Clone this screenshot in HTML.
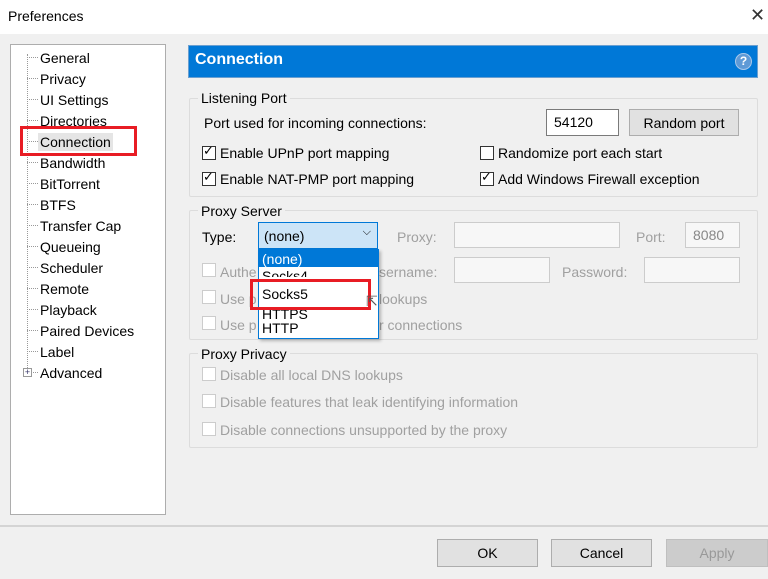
<!DOCTYPE html>
<html><head><meta charset="utf-8"><style>
*{margin:0;padding:0;box-sizing:border-box}
body{width:768px;height:579px;background:#f0f0f0;font-family:"Liberation Sans",Arial,sans-serif;font-size:14px;color:#000;position:relative;overflow:hidden;letter-spacing:0}
.a{position:absolute;white-space:nowrap}
.title{left:0;top:0;width:768px;height:34px;background:#fff}
.tree{left:10px;top:44px;width:156px;height:471px;background:#fff;border:1px solid #adadad}
.ti{position:absolute;left:29px;height:18px;line-height:18px;top:1px}
.dash{position:absolute;left:16px;width:11px;border-top:1px dotted #999}
.grp{border:1px solid #dcdcdc;border-radius:2px}
.gl{background:#f0f0f0;padding:0 3px}
.cb{width:14px;height:14px;border:1px solid #333;background:#fff}
.cbd{border-color:#ccc}
.dis{color:#a0a0a0}
.in{background:#f7f7f7;border:1px solid #ccc}
.btn{background:#e1e1e1;border:1px solid #adadad;text-align:center;line-height:26px;height:28px}
</style></head><body>
<div class="a title"></div>
<div class="a" style="left:8px;top:8px;font-size:14px">Preferences</div>
<div class="a" style="left:750px;top:5px;font-size:18px;color:#333;font-family:'DejaVu Sans',sans-serif;font-weight:normal">✕</div>

<div class="a tree">
<div style="position:absolute;left:16px;top:9px;height:318px;border-left:1px dotted #999"></div>
<div class="dash" style="top:12px"></div><div class="ti" style="top:4px">General</div>
<div class="dash" style="top:33px"></div><div class="ti" style="top:25px">Privacy</div>
<div class="dash" style="top:54px"></div><div class="ti" style="top:46px">UI Settings</div>
<div class="dash" style="top:75px"></div><div class="ti" style="top:67px">Directories</div>
<div class="dash" style="top:96px"></div><div class="ti" style="top:88px;background:#e5e5e5;padding:0 2px;left:27px">Connection</div>
<div class="dash" style="top:117px"></div><div class="ti" style="top:109px">Bandwidth</div>
<div class="dash" style="top:138px"></div><div class="ti" style="top:130px">BitTorrent</div>
<div class="dash" style="top:159px"></div><div class="ti" style="top:151px">BTFS</div>
<div class="dash" style="top:180px"></div><div class="ti" style="top:172px">Transfer Cap</div>
<div class="dash" style="top:201px"></div><div class="ti" style="top:193px">Queueing</div>
<div class="dash" style="top:222px"></div><div class="ti" style="top:214px">Scheduler</div>
<div class="dash" style="top:243px"></div><div class="ti" style="top:235px">Remote</div>
<div class="dash" style="top:264px"></div><div class="ti" style="top:256px">Playback</div>
<div class="dash" style="top:285px"></div><div class="ti" style="top:277px">Paired Devices</div>
<div class="dash" style="top:306px"></div><div class="ti" style="top:298px">Label</div>
<div class="dash" style="top:327px"></div>
<div style="position:absolute;left:12px;top:323px;width:9px;height:9px;border:1px solid #999;background:#fff;font-size:9px;line-height:7px;text-align:center;color:#336">+</div>
<div class="ti" style="top:319px">Advanced</div>
</div>
<div class="a" style="left:20px;top:126px;width:117px;height:30px;border:3px solid #e81c24"></div>

<div class="a" style="left:188px;top:45px;width:570px;height:33px;background:#0078d7;border:1px solid #6a9fd0"></div>
<div class="a" style="left:195px;top:51px;color:#fff;font-weight:bold;font-size:16px">Connection</div>
<div class="a" style="left:735px;top:53px;width:17px;height:17px;border-radius:50%;background:#5f9ad6;border:1px solid #a9c8ea;color:#fff;font-size:12px;font-weight:bold;text-align:center;line-height:15px">?</div>

<div class="a grp" style="left:189px;top:98px;width:569px;height:99px"></div>
<div class="a gl" style="left:198px;top:90px">Listening Port</div>
<div class="a" style="left:204px;top:115px">Port used for incoming connections:</div>
<div class="a" style="left:546px;top:109px;width:73px;height:27px;background:#fff;border:1px solid #7a7a7a;padding:4px 0 0 7px">54120</div>
<div class="a btn" style="left:629px;top:109px;width:110px;height:27px">Random port</div>
<div class="a cb" style="left:202px;top:146px"></div><div class="a" style="left:203px;top:143px;font-size:13px">✓</div>
<div class="a" style="left:220px;top:145px">Enable UPnP port mapping</div>
<div class="a cb" style="left:202px;top:172px"></div><div class="a" style="left:203px;top:169px;font-size:13px">✓</div>
<div class="a" style="left:220px;top:171px">Enable NAT-PMP port mapping</div>
<div class="a cb" style="left:480px;top:146px"></div>
<div class="a" style="left:498px;top:145px">Randomize port each start</div>
<div class="a cb" style="left:480px;top:172px"></div><div class="a" style="left:481px;top:169px;font-size:13px">✓</div>
<div class="a" style="left:498px;top:171px">Add Windows Firewall exception</div>

<div class="a grp" style="left:189px;top:210px;width:569px;height:130px"></div>
<div class="a gl" style="left:198px;top:203px">Proxy Server</div>
<div class="a" style="left:202px;top:229px">Type:</div>
<div class="a" style="left:258px;top:222px;width:120px;height:27px;background:#cce4f7;border:1px solid #0078d7;padding:5px 0 0 5px">(none)<span style="position:absolute;right:6px;top:3px;font-size:11px">⌵</span></div>
<div class="a dis" style="left:397px;top:229px">Proxy:</div>
<div class="a in" style="left:454px;top:222px;width:166px;height:26px"></div>
<div class="a dis" style="left:636px;top:229px">Port:</div>
<div class="a in" style="left:685px;top:222px;width:55px;height:26px;padding:4px 0 0 7px;color:#888">8080</div>
<div class="a cb cbd" style="left:202px;top:263px"></div>
<div class="a dis" style="left:220px;top:264px">Authe</div>
<div class="a dis" style="left:379px;top:264px">sername:</div>
<div class="a in" style="left:454px;top:257px;width:96px;height:26px"></div>
<div class="a dis" style="left:562px;top:264px">Password:</div>
<div class="a in" style="left:644px;top:257px;width:96px;height:26px"></div>
<div class="a cb cbd" style="left:202px;top:290px"></div>
<div class="a dis" style="left:220px;top:291px">Use p</div>
<div class="a dis" style="left:379px;top:291px">lookups</div>
<div class="a cb cbd" style="left:202px;top:316px"></div>
<div class="a dis" style="left:220px;top:317px">Use p</div>
<div class="a dis" style="left:379px;top:317px">r connections</div>
<div class="a" style="left:258px;top:249px;width:121px;height:90px;background:#fff;border:1px solid #0078d7;box-shadow:2px 2px 3px rgba(0,0,0,.25)"></div>
<div class="a" style="left:259px;top:250px;width:119px;height:17px;background:#0078d7"></div>
<div class="a" style="left:262px;top:251px;color:#fff">(none)</div>
<div class="a" style="left:262px;top:268px;height:9px;overflow:hidden">Socks4</div>
<div class="a" style="left:262px;top:286px">Socks5</div>
<div class="a" style="left:262px;top:304px;height:16px;overflow:hidden"><span style="position:relative;top:2px">HTTPS</span></div>
<div class="a" style="left:262px;top:320px">HTTP</div>
<div class="a" style="left:250px;top:279px;width:121px;height:31px;border:3px solid #e81c24"></div>
<div class="a" style="left:366px;top:293px;font-size:14px;color:#555">⇱</div>

<div class="a grp" style="left:189px;top:353px;width:569px;height:95px"></div>
<div class="a gl" style="left:198px;top:346px">Proxy Privacy</div>
<div class="a cb cbd" style="left:202px;top:367px"></div>
<div class="a dis" style="left:220px;top:367px">Disable all local DNS lookups</div>
<div class="a cb cbd" style="left:202px;top:394px"></div>
<div class="a dis" style="left:220px;top:394px">Disable features that leak identifying information</div>
<div class="a cb cbd" style="left:202px;top:422px"></div>
<div class="a dis" style="left:220px;top:422px">Disable connections unsupported by the proxy</div>

<div class="a" style="left:0;top:525px;width:768px;height:2px;background:#d4d4d4"></div>
<div class="a btn" style="left:437px;top:539px;width:101px">OK</div>
<div class="a btn" style="left:551px;top:539px;width:101px">Cancel</div>
<div class="a btn" style="left:666px;top:539px;width:102px;background:#cccccc;border-color:#bfbfbf;color:#999">Apply</div>
</body></html>
